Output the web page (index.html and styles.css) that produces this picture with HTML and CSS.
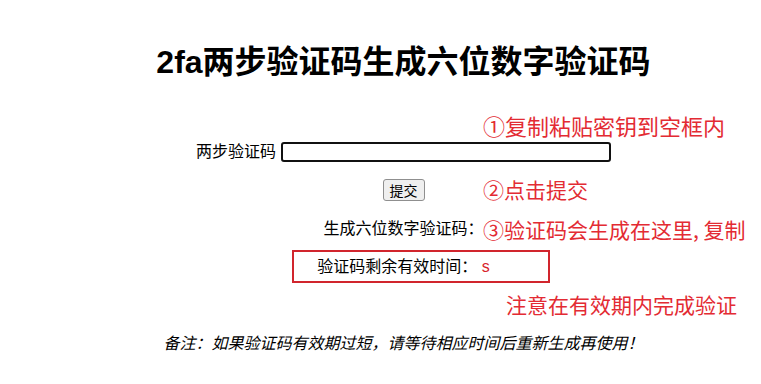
FILE: index.html
```html
<!DOCTYPE html>
<html lang="zh-CN">

<head>
    <meta charset="UTF-8">
    <meta name="viewport" content="width=device-width, initial-scale=1.0">
    <title>2fa两步验证码生成六位数字验证码</title>
    <link rel="stylesheet" href="styles.css">
</head>

<body>

    <div class="page">
        <h1 class="title">2fa两步验证码生成六位数字验证码</h1>

        <div class="row">
            <label for="secret">两步验证码</label>
            <input type="text" id="secret" class="secret">
        </div>

        <div class="row-btn">
            <button id="submit-btn">提交</button>
        </div>

        <div class="line">生成六位数字验证码：<span id="code"></span></div>
        <div class="line">验证码剩余有效时间： <span class="red"><span id="time"></span>s</span></div>

        <p class="note">备注：如果验证码有效期过短，请等待相应时间后重新生成再使用！</p>
    </div>

    <!-- annotations drawn over the page -->
    <div class="mark mark-box"></div>
    <div class="tip tip1">①复制粘贴密钥到空框内</div>
    <div class="tip tip2">②点击提交</div>
    <div class="tip tip3">③验证码会生成在这里, 复制</div>
    <div class="tip tip4">注意在有效期内完成验证</div>

</body>

</html>
```

FILE: styles.css
```css
body {
    margin: 0;
    font-family: "Liberation Sans", "Noto Sans CJK SC", sans-serif;
    color: #000;
}

.page {
    padding-left: 46px;
    text-align: center;
}

.title {
    font-size: 32px;
    line-height: 37px;
    margin: 44px 0 0;
}

.row {
    display: flex;
    justify-content: center;
    align-items: center;
    gap: 5px;
    margin-top: 61px;
    font-size: 16px;
    line-height: 20px;
}

.secret {
    box-sizing: border-box;
    width: 330px;
    height: 20px;
    border: 2px solid #111;
    border-radius: 3px;
    outline: none;
}

.row-btn {
    margin-top: 17px;
    height: 22px;
}

#submit-btn {
    box-sizing: border-box;
    width: 42px;
    height: 22px;
    padding: 0;
    font-family: "Noto Sans CJK SC", sans-serif;
    font-size: 14px;
    line-height: 18px;
    background-color: #efefef;
    border: 1px solid #8f8f8f;
    border-radius: 3px;
    color: #000;
}

.line {
    margin-top: 18px;
    font-size: 16px;
    line-height: 20px;
}

.red {
    color: #d8232a;
}

.note {
    margin: 57px 0 0;
    font-size: 16px;
    line-height: 20px;
    font-style: italic;
}

.mark {
    position: absolute;
    box-sizing: border-box;
}

.mark-box {
    left: 292px;
    top: 250px;
    width: 258px;
    height: 33px;
    border: 2px solid #d1252d;
}

.tip {
    position: absolute;
    font-family: "Noto Sans CJK SC", sans-serif;
    font-size: 21px;
    line-height: 26px;
    color: #e32b33;
    white-space: nowrap;
}

.tip1 {
    left: 483px;
    top: 112px;
    font-size: 22px;
}

.tip2 {
    left: 483px;
    top: 176px;
}

.tip3 {
    left: 483px;
    top: 216px;
}

.tip4 {
    left: 506px;
    top: 291px;
}
```
